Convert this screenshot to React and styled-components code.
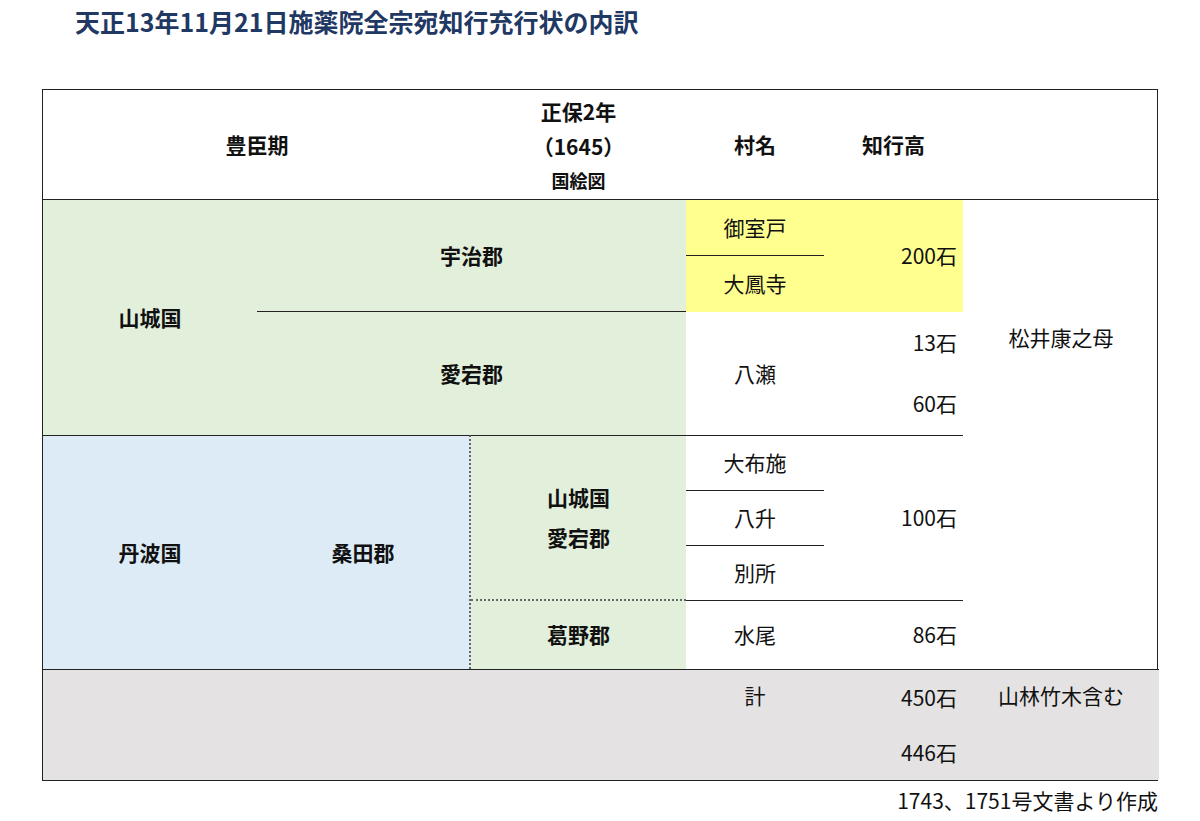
import React from "react";
import styled, { createGlobalStyle } from "styled-components";

const Global = createGlobalStyle`
  body { margin: 0; background: #fff; font-family: "Noto Sans CJK JP", "Noto Sans", sans-serif; color: #111; }
`;

const Page = styled.div`
  width: 1200px;
  height: 821px;
  padding: 4px 42px 0 42px;
  box-sizing: border-box;
`;

const Title = styled.h1`
  margin: 0 0 0 33px;
  height: 85px;
  font-size: 25px;
  font-weight: 700;
  color: #1f3864;
  line-height: 34px;
`;

const Table = styled.div`
  display: grid;
  grid-template-columns: 214px 214px 215px 138px 139px 196px;
  grid-template-rows: 110px 56px 56px 123px 56px 55px 55px 68px 111px;
  width: 1116px;
  border: 1.5px solid #222;
  box-sizing: border-box;
  font-size: 21px;
`;

const Cell = styled.div`
  grid-column: ${p => p.c};
  grid-row: ${p => p.r};
  background: ${p => p.bg || "transparent"};
  display: flex;
  flex-direction: column;
  align-items: ${p => p.right ? "flex-end" : "center"};
  justify-content: ${p => p.top ? "flex-start" : p.split ? "space-around" : "center"};
  padding: ${p => p.right ? "0 6px 0 0" : p.top ? "6px 0 0" : "0"};
  font-weight: ${p => p.bold ? 700 : 400};
  border-bottom: ${p => p.bb || "none"};
  border-right: ${p => p.br || "none"};
  box-sizing: border-box;
  line-height: 1.9;
`;

const Owner = styled(Cell)`
  justify-content: flex-start;
  padding-top: 118px;
`;

const Caption = styled.div`
  text-align: right;
  font-size: 21px;
  padding: 4px 6px 0 0;
  width: 1116px;
`;

const G = "#e2efda", B = "#ddebf7", Y = "#ffff8f", GR = "#e4e2e2";
const line = "1.5px solid #222";
const thin = "1px solid #222";
const dot = "2px dotted #666";

export default function App() {
  return (
    <Page>
      <Global />
      <Title>天正13年11月21日施薬院全宗宛知行充行状の内訳</Title>
      <Table>
        <Cell c="1 / 3" r="1" bold bb={line}>豊臣期</Cell>
        <Cell c="3" r="1" bold bb={line} style={{ lineHeight: 1.7 }}>
          <span>正保2年</span><span>（1645）</span><span style={{ fontSize: 18 }}>国絵図</span>
        </Cell>
        <Cell c="4" r="1" bold bb={line}>村名</Cell>
        <Cell c="5" r="1" bold bb={line}>知行高</Cell>
        <Cell c="6" r="1" bb={line} />

        <Cell c="1" r="2 / 5" bg={G} bold>山城国</Cell>
        <Cell c="2 / 4" r="2 / 4" bg={G} bold bb={thin}>宇治郡</Cell>
        <Cell c="2 / 4" r="4" bg={G} bold>愛宕郡</Cell>
        <Cell c="4" r="2" bg={Y} bb={thin}>御室戸</Cell>
        <Cell c="4" r="3" bg={Y}>大鳳寺</Cell>
        <Cell c="5" r="2 / 4" bg={Y} right>200石</Cell>
        <Cell c="4" r="4">八瀬</Cell>
        <Cell c="5" r="4" right split><span>13石</span><span>60石</span></Cell>
        <Owner c="6" r="2 / 9">松井康之母</Owner>

        <Cell c="1" r="5 / 9" bg={B} bold style={{ borderTop: line }}>丹波国</Cell>
        <Cell c="2" r="5 / 9" bg={B} bold br={dot} style={{ borderTop: line }}>桑田郡</Cell>
        <Cell c="3" r="5 / 8" bg={G} bold bb={dot} style={{ borderTop: line }}>
          <span>山城国</span><span>愛宕郡</span>
        </Cell>
        <Cell c="3" r="8" bg={G} bold>葛野郡</Cell>
        <Cell c="4" r="5" bb={thin} style={{ borderTop: line }}>大布施</Cell>
        <Cell c="4" r="6" bb={thin}>八升</Cell>
        <Cell c="4" r="7" bb={thin}>別所</Cell>
        <Cell c="5" r="5 / 8" bb={thin} right style={{ borderTop: line }}>100石</Cell>
        <Cell c="4" r="8">水尾</Cell>
        <Cell c="5" r="8" right>86石</Cell>

        <Cell c="1 / 4" r="9" bg={GR} style={{ borderTop: line }} />
        <Cell c="4" r="9" bg={GR} top style={{ borderTop: line }}>計</Cell>
        <Cell c="5" r="9" bg={GR} right split style={{ borderTop: line }}><span>450石</span><span>446石</span></Cell>
        <Cell c="6" r="9" bg={GR} top style={{ borderTop: line }}>山林竹木含む</Cell>
      </Table>
      <Caption>1743、1751号文書より作成</Caption>
    </Page>
  );
}
